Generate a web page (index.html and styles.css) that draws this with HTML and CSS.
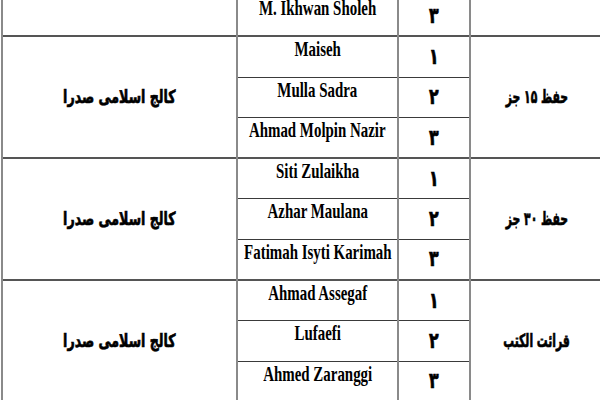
FILE: index.html
```html
<!DOCTYPE html>
<html lang="fa">
<head>
<meta charset="utf-8">
<link rel="stylesheet" href="styles.css">
</head>
<body>
<div class="viewport">
<table class="results" dir="rtl">
<colgroup>
<col class="c-cat"><col class="c-rank"><col class="c-name"><col class="c-college">
</colgroup>
<tbody>
<tr>
<td class="cat"></td>
<td class="rank"><span class="fa">۳</span></td>
<td class="name"><span class="en">M. Ikhwan Sholeh</span></td>
<td class="college"></td>
</tr>
<tr class="group">
<td class="cat" rowspan="3"><span class="fa">حفظ ۱۵ جز</span></td>
<td class="rank"><span class="fa">۱</span></td>
<td class="name"><span class="en">Maiseh</span></td>
<td class="college" rowspan="3"><span class="fa">کالج اسلامی صدرا</span></td>
</tr>
<tr>
<td class="rank"><span class="fa">۲</span></td>
<td class="name"><span class="en">Mulla Sadra</span></td>
</tr>
<tr>
<td class="rank"><span class="fa">۳</span></td>
<td class="name"><span class="en">Ahmad Molpin Nazir</span></td>
</tr>
<tr class="group">
<td class="cat" rowspan="3"><span class="fa">حفظ ۳۰ جز</span></td>
<td class="rank"><span class="fa">۱</span></td>
<td class="name"><span class="en">Siti Zulaikha</span></td>
<td class="college" rowspan="3"><span class="fa">کالج اسلامی صدرا</span></td>
</tr>
<tr>
<td class="rank"><span class="fa">۲</span></td>
<td class="name"><span class="en">Azhar Maulana</span></td>
</tr>
<tr>
<td class="rank"><span class="fa">۳</span></td>
<td class="name"><span class="en">Fatimah Isyti Karimah</span></td>
</tr>
<tr class="group">
<td class="cat" rowspan="3"><span class="fa">قرائت الکتب</span></td>
<td class="rank"><span class="fa">۱</span></td>
<td class="name"><span class="en">Ahmad Assegaf</span></td>
<td class="college" rowspan="3"><span class="fa">کالج اسلامی صدرا</span></td>
</tr>
<tr>
<td class="rank"><span class="fa">۲</span></td>
<td class="name"><span class="en">Lufaefi</span></td>
</tr>
<tr>
<td class="rank"><span class="fa">۳</span></td>
<td class="name"><span class="en">Ahmed Zaranggi</span></td>
</tr>
</tbody>
</table>
</div>
</body>
</html>
```

FILE: styles.css
```css
html, body {
  margin: 0;
  padding: 0;
  background: #ffffff;
}

.viewport {
  width: 600px;
  height: 400px;
  overflow: hidden;
  position: relative;
}

.results {
  border-collapse: collapse;
  table-layout: fixed;
  width: 602px;
  margin: -5px 0 0 1px;
  color: #000;
}

.c-cat { width: 134px; }
.c-rank { width: 72px; }
.c-name { width: 161px; }
.c-college { width: 235px; }

.results td {
  height: 39.3px;
  padding: 0;
  text-align: center;
  vertical-align: middle;
  border-left: 2px solid #8a8a8a;
  border-right: 2px solid #8a8a8a;
  border-top: 1px solid #3a3a3a;
  border-bottom: 1px solid #3a3a3a;
}

.results tr.group td {
  border-top: 2px solid #555555;
}

.results td.name {
  vertical-align: top;
  padding-top: 0;
}

.en {
  display: inline-block;
  margin: 0 -40px;
  font-family: "Liberation Serif", "Times New Roman", serif;
  font-weight: bold;
  font-size: 21px;
  line-height: 24px;
  white-space: nowrap;
  transform: scaleX(0.71);
}

.fa {
  display: inline-block;
  margin: 0 -20px;
  font-family: "DejaVu Sans", sans-serif;
  font-weight: bold;
  font-size: 18px;
  line-height: 22px;
  white-space: nowrap;
  -webkit-text-stroke: 0.7px #000;
  transform: scaleX(0.7);
}

.cat .fa {
  font-size: 18px;
  transform: scaleX(0.6);
}

.rank .fa {
  font-size: 22px;
  transform: scaleX(0.72);
}
```
